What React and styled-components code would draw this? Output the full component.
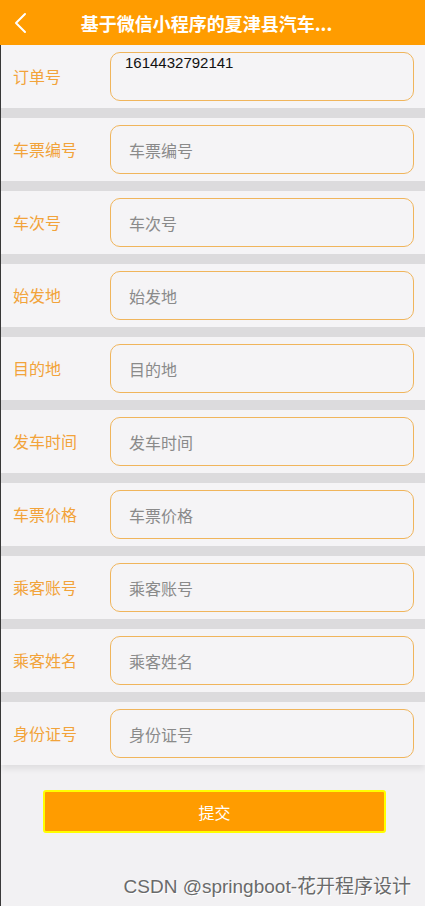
import React from "react";
import styled, { createGlobalStyle } from "styled-components";

const Global = createGlobalStyle`
  html, body { margin: 0; padding: 0; background: #f2f1f3; }
  body { font-family: "Noto Sans CJK SC", "Liberation Sans", sans-serif; }
  * { box-sizing: border-box; }
`;

const Page = styled.div`
  width: 425px;
  min-height: 906px;
  background: #f2f1f3;
  position: relative;
  border-left: 1px solid #3a3a3a;
`;

const Header = styled.div`
  height: 45px;
  background: #ff9c00;
  display: flex;
  align-items: center;
  position: relative;
  margin-left: -1px;
`;

const Back = styled.div`
  width: 42px;
  height: 45px;
  display: flex;
  align-items: center;
  justify-content: center;
  position: absolute;
  left: 0;
  top: 0;
`;

const Title = styled.div`
  flex: 1;
  text-align: center;
  color: #fff;
  font-size: 18px;
  font-weight: 700;
  padding-right: 12px;
`;

const Form = styled.div`
  display: flex;
  flex-direction: column;
  box-shadow: 0 4px 6px rgba(0, 0, 0, 0.08);
`;

const Row = styled.div`
  height: 63px;
  background: #f5f4f6;
  display: flex;
  align-items: center;
  padding: 0 11px 0 12px;
  border-bottom: ${p => (p.$last ? "none" : "10px solid #dcdbdd")};
  box-sizing: content-box;
`;

const Label = styled.div`
  width: 97px;
  color: #f2a33a;
  font-size: 16px;
  margin-top: -2px;
`;

const Field = styled.div`
  flex: 1;
  height: 49px;
  border: 1px solid #f0b55c;
  border-radius: 10px;
  padding: ${p => (p.$filled ? "0 14px" : "0 18px")};
  display: flex;
  align-items: ${p => (p.$filled ? "flex-start" : "center")};
  font-size: ${p => (p.$filled ? "15px" : "16px")};
  color: ${p => (p.$filled ? "#111" : "#8a8a8a")};
  font-family: ${p => (p.$filled ? '"Liberation Sans", sans-serif' : '"Noto Sans CJK SC", sans-serif')};
  line-height: ${p => (p.$filled ? "18px" : "normal")};
  padding-top: ${p => (p.$filled ? "1px" : "0")};
`;

const Actions = styled.div`
  padding: 25px 40px 0 42px;
`;

const Submit = styled.button`
  width: 343px;
  height: 43px;
  background: #ff9c00;
  border: 2px solid #ffff00;
  border-radius: 3px;
  color: #fff;
  font-size: 16px;
  font-family: "Noto Sans CJK SC", sans-serif;
  display: block;
`;

const Watermark = styled.div`
  position: absolute;
  right: 14px;
  bottom: 8px;
  color: #6a6a6a;
  font-size: 19px;
  font-family: "Liberation Sans", "Noto Sans CJK SC", sans-serif;
  text-shadow: 1px 1px 0 #fff;
`;

const fields = [
  { label: "订单号", value: "1614432792141" },
  { label: "车票编号" },
  { label: "车次号" },
  { label: "始发地" },
  { label: "目的地" },
  { label: "发车时间" },
  { label: "车票价格" },
  { label: "乘客账号" },
  { label: "乘客姓名" },
  { label: "身份证号" },
];

export default function App() {
  return (
    <>
      <Global />
      <Page>
        <Header>
          <Back>
            <svg width="16" height="22" viewBox="0 0 16 22">
              <path d="M12 2 L3 11 L12 20" fill="none" stroke="#fff" strokeWidth="2" strokeLinecap="round" strokeLinejoin="round" />
            </svg>
          </Back>
          <Title>基于微信小程序的夏津县汽车...</Title>
        </Header>
        <Form>
          {fields.map((f, i) => (
            <Row key={f.label} $last={i === fields.length - 1}>
              <Label>{f.label}</Label>
              <Field $filled={!!f.value}>{f.value || f.label}</Field>
            </Row>
          ))}
        </Form>
        <Actions>
          <Submit>提交</Submit>
        </Actions>
        <Watermark>CSDN @springboot-花开程序设计</Watermark>
      </Page>
    </>
  );
}
